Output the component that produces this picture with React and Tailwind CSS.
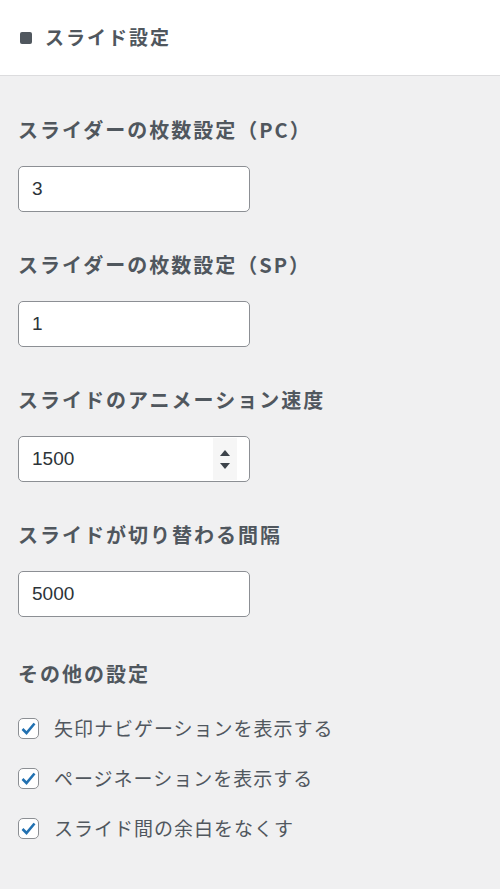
import React, { useState } from 'react';

const font = { fontFamily: '"Noto Sans CJK JP", "Noto Sans", sans-serif' };

function NumberField({ value, spinner }) {
    return (
        <div className="relative w-[232px] h-[46px] bg-white border border-[#8c8f94] rounded-[5px] flex items-center">
            <span className="pl-[13px] text-[19px] text-[#2c3338]" style={{ fontFamily: '"Liberation Sans", Arial, sans-serif' }}>
                {value}
            </span>
            {spinner && (
                <div className="absolute right-[12px] top-[1px] bottom-[1px] w-[24px] bg-[#f6f6f6] flex flex-col items-center justify-center gap-[7px]">
                    <svg width="10" height="6" viewBox="0 0 10 6">
                        <path d="M5 0 L10 6 L0 6 Z" fill="#3c434a" />
                    </svg>
                    <svg width="10" height="6" viewBox="0 0 10 6">
                        <path d="M0 0 L10 0 L5 6 Z" fill="#3c434a" />
                    </svg>
                </div>
            )}
        </div>
    );
}

function Check({ label }) {
    const [checked, setChecked] = useState(true);
    return (
        <label className="flex items-center h-[24px] cursor-pointer" onClick={() => setChecked(!checked)}>
            <span className="w-[21px] h-[21px] bg-white border border-[#8c8f94] rounded-[5px] flex items-center justify-center">
                {checked && (
                    <svg width="15" height="13" viewBox="0 0 15 13">
                        <path d="M1.5 7 L5.5 11 L13.5 1.5" fill="none" stroke="#2271b1" strokeWidth="2.6" />
                    </svg>
                )}
            </span>
            <span className="ml-[15px] text-[19px] tracking-[1px] text-[#50575e]">{label}</span>
        </label>
    );
}

export default function App() {
    const fields = [
        { label: 'スライダーの枚数設定（PC）', value: '3' },
        { label: 'スライダーの枚数設定（SP）', value: '1' },
        { label: 'スライドのアニメーション速度', value: '1500', spinner: true },
        { label: 'スライドが切り替わる間隔', value: '5000' },
    ];

    return (
        <div className="w-[500px] h-[889px] bg-[#f0f0f1] overflow-hidden" style={font}>
            <div className="h-[76px] bg-white border-b border-[#dcdcde] flex items-center pl-[20px]">
                <span className="w-[12px] h-[12px] rounded-[2px] bg-[#50575e]" />
                <h2 className="ml-[13px] text-[19px] font-bold tracking-[2px] text-[#50575e]">スライド設定</h2>
            </div>
            <div className="pl-[18px] pt-[38px]">
                {fields.map((f) => (
                    <div key={f.label} className="mb-[37px]">
                        <div className="text-[20px] font-bold tracking-[2px] text-[#50575e] leading-[32px]">{f.label}</div>
                        <div className="mt-[20px]">
                            <NumberField value={f.value} spinner={f.spinner} />
                        </div>
                    </div>
                ))}
                <div className="mt-[41px] text-[20px] font-bold tracking-[2px] text-[#50575e] leading-[32px]">その他の設定</div>
                <div className="mt-[26px] flex flex-col gap-[26px]">
                    <Check label="矢印ナビゲーションを表示する" />
                    <Check label="ページネーションを表示する" />
                    <Check label="スライド間の余白をなくす" />
                </div>
            </div>
        </div>
    );
}
